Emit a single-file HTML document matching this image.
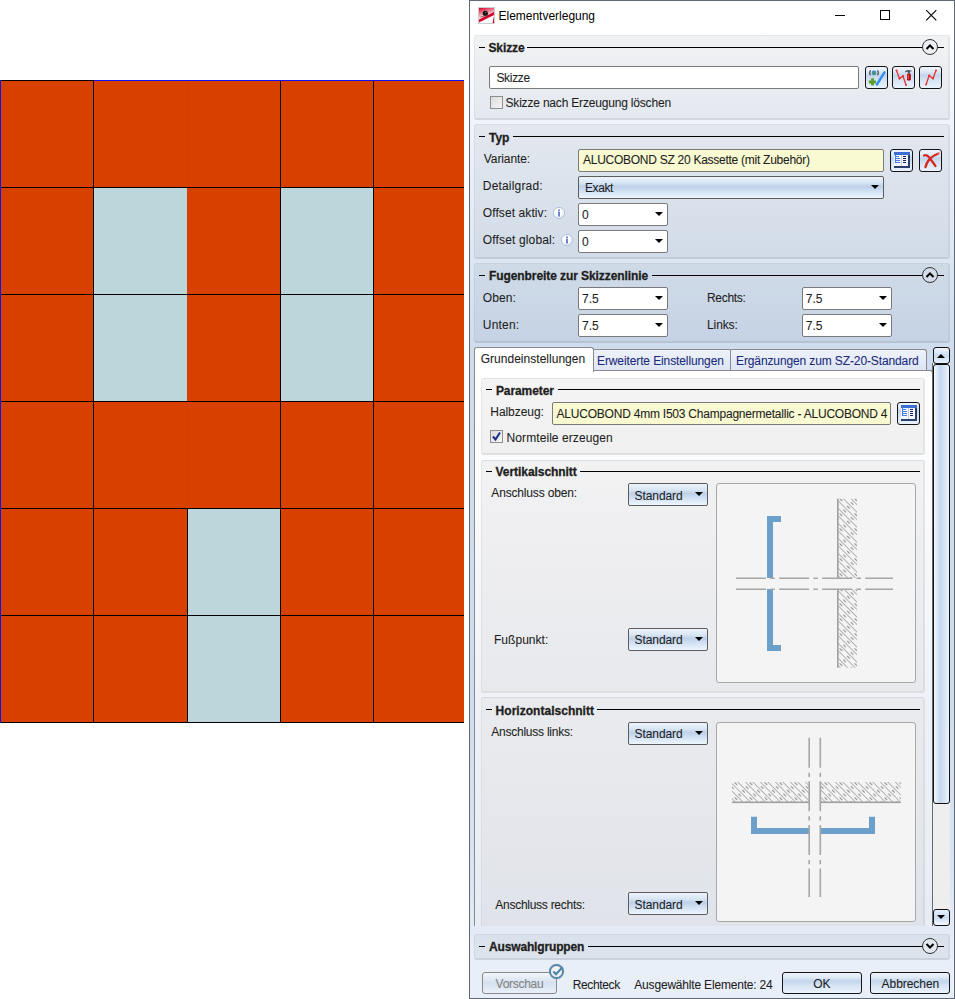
<!DOCTYPE html>
<html><head><meta charset="utf-8">
<style>
*{margin:0;padding:0;box-sizing:border-box}
html,body{width:955px;height:999px;overflow:hidden;background:#fff}
body{position:relative;font-family:"Liberation Sans",sans-serif;font-size:12px;color:#1e1e1e}
.a{position:absolute}
.t{position:absolute;white-space:nowrap;line-height:12px;font-size:12px;letter-spacing:-0.2px;-webkit-text-stroke:0.08px currentColor}
.b{font-weight:bold;letter-spacing:-0.15px;-webkit-text-stroke:0.3px currentColor}
#dlg{position:absolute;left:469px;top:0;width:486px;height:999px;border:1px solid #5f6873;
 background:linear-gradient(to bottom,#fff 0px,#fff 30px,#f2f5fb 110px,#dde7f3 250px,#cfdcee 345px,#cddcef 700px,#dbe5f3 880px,#e9eff8 960px,#e9eff8 999px)}
.grp{position:absolute;border-radius:3px;background:rgba(70,80,95,0.07);border:1px solid rgba(120,130,140,0.10);border-bottom:2px solid rgba(90,100,110,0.14);border-right:2px solid rgba(90,100,110,0.08)}
.hl{position:absolute;height:1px;background:#000}
.dash{position:absolute;height:1px;width:6px;background:#000}
.cb{position:absolute;background:#fff;border:1px solid #7a7a7a;border-radius:2px}
.cbg{position:absolute;border:1px solid #5c5c5c;border-radius:2px;background:linear-gradient(to bottom,#eef4fb 0%,#d8e5f4 28%,#bed1e9 45%,#d2e1f3 68%,#eef6fe 100%)}
.arr{position:absolute;width:0;height:0;border-left:4px solid transparent;border-right:4px solid transparent;border-top:4px solid #000}
.btn{position:absolute;border:1px solid #151515;border-radius:3px;background:linear-gradient(to bottom,#f0f5fb 0%,#dfe9f6 22%,#c3d5eb 40%,#d5e3f4 62%,#eaf3fd 100%)}
.circ{position:absolute;width:16px;height:16px;border:1px solid #333;border-radius:50%;background:transparent}
</style></head><body>

<!-- left grid -->
<svg class="a" style="left:0;top:0" width="465" height="725" viewBox="0 0 465 725" shape-rendering="crispEdges">
<rect x="0" y="80" width="464" height="643" fill="#d84000"/>
<rect x="93" y="187" width="94" height="107" fill="#bdd6dc"/>
<rect x="280" y="187" width="93" height="107" fill="#bdd6dc"/>
<rect x="93" y="294" width="94" height="107" fill="#bdd6dc"/>
<rect x="280" y="294" width="93" height="107" fill="#bdd6dc"/>
<rect x="187" y="508" width="93" height="107" fill="#bdd6dc"/>
<rect x="187" y="615" width="93" height="107" fill="#bdd6dc"/>
<rect x="187" y="80" width="1" height="428" fill="#cf3e02"/>
<rect x="93" y="80" width="1" height="643" fill="#000"/>
<rect x="280" y="80" width="1" height="643" fill="#000"/>
<rect x="373" y="80" width="1" height="643" fill="#000"/>
<rect x="187" y="508" width="1" height="215" fill="#000"/>
<rect x="0" y="187" width="464" height="1" fill="#000"/>
<rect x="0" y="294" width="464" height="1" fill="#000"/>
<rect x="0" y="401" width="464" height="1" fill="#000"/>
<rect x="0" y="508" width="464" height="1" fill="#000"/>
<rect x="0" y="615" width="464" height="1" fill="#000"/>
<rect x="0" y="722" width="464" height="1" fill="#000"/>
<rect x="0" y="80" width="94" height="1" fill="#000"/>
<rect x="94" y="80" width="370" height="1" fill="#1010f0"/>
<rect x="0" y="80" width="1" height="643" fill="#1010f0"/>
</svg>

<div id="dlg"></div>

<!-- title bar -->
<svg class="a" style="left:478px;top:7px" width="17" height="17" viewBox="0 0 17 17">
<defs><linearGradient id="ig" x1="0" y1="0" x2="0.3" y2="1"><stop offset="0" stop-color="#dc0028"/><stop offset="0.45" stop-color="#f0a0b0"/><stop offset="0.75" stop-color="#fff"/></linearGradient></defs>
<rect x="0.5" y="0.5" width="16" height="16" fill="#fff" stroke="#c8cdd2" stroke-width="1"/>
<rect x="1" y="1" width="15" height="15" fill="url(#ig)"/>
<path d="M1 12.5 L16 5 L16 8 L1 15.5 Z" fill="#dc0028"/>
<path d="M16 9 L16 16 L14.5 16 Z" fill="#dc0028"/>
<circle cx="7.3" cy="6.3" r="2.6" fill="#151515"/>
<circle cx="7.8" cy="5.6" r="0.7" fill="#888"/>
<path d="M2.5 10.2 L6 9 L10.5 8.4" stroke="#444" stroke-width="0.7" fill="none"/>
</svg>
<div class="t" style="left:498.5px;top:10px;letter-spacing:-0.013px;color:#000;-webkit-text-stroke:0">Elementverlegung</div>
<div class="a" style="left:835px;top:15px;width:10px;height:1px;background:#000"></div>
<div class="a" style="left:880px;top:10px;width:10px;height:10px;border:1px solid #000"></div>
<svg class="a" style="left:925px;top:9px" width="13" height="13" viewBox="0 0 13 13"><path d="M1.2 1.2 L11.3 11.3 M11.3 1.2 L1.2 11.3" stroke="#000" stroke-width="1.1"/></svg>

<!-- Skizze group -->
<div class="grp" style="left:474px;top:35px;width:476px;height:85px"></div>
<div class="dash" style="left:479px;top:47px"></div>
<div class="t b" style="left:488.4px;top:42px;letter-spacing:-0.08px">Skizze</div>
<div class="hl" style="left:527px;top:47px;width:417px"></div>
<div class="circ" style="left:922px;top:39px;background:#eceff4"></div>
<svg class="a" style="left:925px;top:43px" width="10" height="8" viewBox="0 0 10 8"><path d="M1.5 6 L5 2.5 L8.5 6" stroke="#000" stroke-width="2" fill="none"/></svg>
<div class="cb" style="left:489px;top:66px;width:370px;height:23px"></div>
<div class="t" style="left:496.4px;top:72px;letter-spacing:-0.3px">Skizze</div>
<div class="btn" style="left:865px;top:66px;width:23px;height:23px"></div>
<div class="btn" style="left:892px;top:66px;width:23px;height:23px"></div>
<div class="btn" style="left:919px;top:66px;width:23px;height:23px"></div>
<svg class="a" style="left:865px;top:66px" width="23" height="23" viewBox="0 0 23 23">
<path d="M5.6 4.4 Q3.6 6.8 5.6 9.2" stroke="#5a5a5a" stroke-width="1.3" fill="none"/><path d="M12.4 4.4 Q14.4 6.8 12.4 9.2" stroke="#5a5a5a" stroke-width="1.3" fill="none"/>
<circle cx="9" cy="6.9" r="2.4" fill="#3b8fd4"/><path d="M7.6 6.2 L9 8.2 L10.6 6.6" stroke="#4aa040" stroke-width="1.2" fill="none"/>
<path d="M6.1 12.2 h2.8 v2.4 h2.2 v2.8 h-2.2 v2.2 h-2.8 v-2.2 h-2.2 v-2.8 h2.2 Z" fill="#5c9e2c"/>
<path d="M19.5 6.3 L11.9 18.5" stroke="#2f90f2" stroke-width="2.4" stroke-linecap="round"/>
</svg>
<svg class="a" style="left:892px;top:66px" width="23" height="23" viewBox="0 0 23 23">
<path d="M4.5 4.4 L7.5 12.6 L11 10 L14 19" stroke="#e8302a" stroke-width="1.3" fill="none"/>
<circle cx="4.5" cy="4.4" r="1" fill="#e8302a"/><circle cx="7.5" cy="12.6" r="1" fill="#e8302a"/><circle cx="11" cy="10" r="1" fill="#e8302a"/><circle cx="14" cy="19" r="1" fill="#e8302a"/>
<rect x="15" y="7.5" width="3.8" height="7" rx="1" fill="#b00000"/><rect x="15.7" y="8.5" width="1.2" height="4.5" fill="#ff6060"/>
<path d="M13 5.2 Q16 3.2 19.5 4.6 L19.5 5.6 L18 5.6 L18 7.5 L15.8 7.5 L15.8 5.8 Q14.5 5.6 13 6.4 Z" fill="#505a66"/>
</svg>
<svg class="a" style="left:919px;top:66px" width="23" height="23" viewBox="0 0 23 23">
<path d="M7.1 18.6 L10.1 9.6 L14 12.6 L17 4.4" stroke="#e8302a" stroke-width="1.3" fill="none"/>
<circle cx="7.1" cy="18.6" r="1" fill="#e8302a"/><circle cx="10.1" cy="9.6" r="1" fill="#e8302a"/><circle cx="14" cy="12.6" r="1" fill="#e8302a"/><circle cx="17" cy="4.4" r="1" fill="#e8302a"/>
</svg>
<div class="a" style="left:490px;top:96px;width:13px;height:13px;border:1px solid #8e8f8f;background:linear-gradient(135deg,#dcdcdc,#f6f6f6)"></div>
<div class="t" style="left:505.5px;top:97px;letter-spacing:-0.186px">Skizze nach Erzeugung löschen</div>

<!-- Typ group -->
<div class="grp" style="left:474px;top:124px;width:476px;height:135px"></div>
<div class="dash" style="left:479px;top:136px"></div>
<div class="t b" style="left:489px;top:132px;letter-spacing:-0.05px">Typ</div>
<div class="hl" style="left:513px;top:136px;width:431px"></div>
<div class="t" style="left:483.8px;top:153px;letter-spacing:-0.1px">Variante:</div>
<div class="cb" style="left:578px;top:149px;width:306px;height:23px;background:#fafad2"></div>
<div class="t" style="left:583px;top:154px;letter-spacing:-0.265px">ALUCOBOND SZ 20 Kassette (mit Zubehör)</div>
<div class="btn" style="left:890px;top:149px;width:23px;height:23px"></div>
<div class="btn" style="left:919px;top:149px;width:23px;height:23px"></div>
<svg class="a" style="left:890px;top:149px" width="23" height="23" viewBox="0 0 23 23" shape-rendering="crispEdges">
<rect x="4" y="3" width="16" height="16" fill="#f4f7fc"/>
<rect x="4" y="3" width="16" height="3" fill="#3d6ed6"/>
<rect x="18" y="6" width="2" height="13" fill="#2a3f6c"/><rect x="4" y="17" width="16" height="2" fill="#2a3f6c"/>
<rect x="11" y="6" width="1" height="11" fill="#c4ccd8"/>
<rect x="5" y="6" width="1" height="8" fill="#4a7ae6"/>
<rect x="5" y="7" width="4" height="1" fill="#4a7ae6"/><rect x="6" y="9" width="4" height="1" fill="#4a7ae6"/><rect x="6" y="11" width="4" height="1" fill="#4a7ae6"/><rect x="6" y="13" width="4" height="1" fill="#4a7ae6"/>
<rect x="13" y="7" width="3" height="1" fill="#121d5e"/><rect x="13" y="9" width="3" height="1" fill="#121d5e"/><rect x="13" y="11" width="3" height="1" fill="#121d5e"/><rect x="13" y="13" width="3" height="1" fill="#121d5e"/>
</svg>
<svg class="a" style="left:919px;top:149px" width="23" height="23" viewBox="0 0 23 23">
<path d="M5 6.5 Q8 5 11 9.5 Q14 13.5 16.5 17" stroke="#d8281e" stroke-width="2.2" fill="none" stroke-linecap="round"/>
<path d="M19.5 4.5 Q13 7 9.5 11.5 Q7 15 6.5 18" stroke="#d8281e" stroke-width="2.4" fill="none" stroke-linecap="round"/>
<circle cx="19.5" cy="4.6" r="0.8" fill="#f08080"/>
</svg>
<div class="t" style="left:482.8px;top:180px;letter-spacing:0.18px">Detailgrad:</div>
<div class="cbg" style="left:578px;top:176px;width:306px;height:23px"></div>
<div class="t" style="left:585px;top:182px;letter-spacing:-0.4px">Exakt</div>
<div class="arr" style="left:871px;top:185px"></div>
<div class="t" style="left:482.8px;top:207px;letter-spacing:0.092px">Offset aktiv:</div>
<svg class="a" style="left:552px;top:206px" width="14" height="14" viewBox="0 0 14 14">
<defs><radialGradient id="ri559" cx="0.45" cy="0.4" r="0.6"><stop offset="0.5" stop-color="#fff"/><stop offset="1" stop-color="#dfe6f2"/></radialGradient></defs>
<circle cx="7" cy="7" r="5.6" fill="url(#ri559)" stroke="#a8bcd8" stroke-width="0.9"/>
<rect x="6.2" y="3.4" width="1.6" height="1.5" fill="#4a66c8"/><rect x="6.2" y="5.6" width="1.6" height="5" fill="#4a66c8"/>
</svg>
<div class="cb" style="left:578px;top:203px;width:90px;height:23px"></div>
<div class="t" style="left:582px;top:209px;letter-spacing:0px">0</div>
<div class="arr" style="left:655px;top:212px"></div>
<div class="t" style="left:482.8px;top:234px;letter-spacing:0.146px">Offset global:</div>
<svg class="a" style="left:560px;top:233px" width="14" height="14" viewBox="0 0 14 14">
<defs><radialGradient id="ri567" cx="0.45" cy="0.4" r="0.6"><stop offset="0.5" stop-color="#fff"/><stop offset="1" stop-color="#dfe6f2"/></radialGradient></defs>
<circle cx="7" cy="7" r="5.6" fill="url(#ri567)" stroke="#a8bcd8" stroke-width="0.9"/>
<rect x="6.2" y="3.4" width="1.6" height="1.5" fill="#4a66c8"/><rect x="6.2" y="5.6" width="1.6" height="5" fill="#4a66c8"/>
</svg>
<div class="cb" style="left:578px;top:230px;width:90px;height:23px"></div>
<div class="t" style="left:582px;top:236px;letter-spacing:0px">0</div>
<div class="arr" style="left:655px;top:239px"></div>

<!-- Fugenbreite group -->
<div class="grp" style="left:474px;top:263px;width:476px;height:80px"></div>
<div class="dash" style="left:479px;top:275px"></div>
<div class="t b" style="left:489px;top:270px;letter-spacing:-0.081px">Fugenbreite zur Skizzenlinie</div>
<div class="hl" style="left:652px;top:275px;width:292px"></div>
<div class="circ" style="left:922px;top:267px;background:#d3dce8"></div>
<svg class="a" style="left:925px;top:271px" width="10" height="8" viewBox="0 0 10 8"><path d="M1.5 6 L5 2.5 L8.5 6" stroke="#000" stroke-width="2" fill="none"/></svg>
<div class="t" style="left:482.8px;top:292px;letter-spacing:0.1px">Oben:</div>
<div class="cb" style="left:578px;top:287px;width:90px;height:23px"></div>
<div class="t" style="left:582px;top:293px;letter-spacing:0px">7.5</div>
<div class="arr" style="left:655px;top:296px"></div>
<div class="t" style="left:482.8px;top:319px;letter-spacing:0.2px">Unten:</div>
<div class="cb" style="left:578px;top:314px;width:90px;height:23px"></div>
<div class="t" style="left:582px;top:320px;letter-spacing:0px">7.5</div>
<div class="arr" style="left:655px;top:323px"></div>
<div class="t" style="left:707px;top:292px;letter-spacing:-0.3px">Rechts:</div>
<div class="cb" style="left:802px;top:287px;width:90px;height:23px"></div>
<div class="t" style="left:805.8px;top:293px;letter-spacing:0px">7.5</div>
<div class="arr" style="left:879px;top:296px"></div>
<div class="t" style="left:707px;top:319px;letter-spacing:-0.1px">Links:</div>
<div class="cb" style="left:802px;top:314px;width:90px;height:23px"></div>
<div class="t" style="left:805.8px;top:320px;letter-spacing:0px">7.5</div>
<div class="arr" style="left:879px;top:323px"></div>

<!-- tabs -->
<div class="a" style="left:474px;top:370px;width:459px;height:556px;border:1px solid #8a8a8a;border-bottom:none;border-radius:0 3px 0 0;background:linear-gradient(to bottom,#fff 0px,#fbfcfd 80px,#f3f6fa 250px,#edf1f7 350px,#e8edf5 555px)"></div>
<div class="a" style="left:593px;top:349px;width:138px;height:21px;border:1px solid #8a8a8a;border-bottom:none;border-radius:2px 2px 0 0;background:linear-gradient(to bottom,#eef2f9,#dde5f7)"></div>
<div class="a" style="left:730px;top:349px;width:197px;height:21px;border:1px solid #8a8a8a;border-bottom:none;border-radius:2px 3px 0 0;background:linear-gradient(to bottom,#eef2f9,#dde5f7)"></div>
<div class="a" style="left:474px;top:347px;width:120px;height:25px;border:1px solid #8a8a8a;border-bottom:none;border-radius:3px 3px 0 0;background:#fff"></div>
<div class="t" style="left:480.7px;top:353px;letter-spacing:0.024px">Grundeinstellungen</div>
<div class="t" style="left:597px;top:355px;letter-spacing:-0.109px;color:#1c2a78">Erweiterte Einstellungen</div>
<div class="t" style="left:736px;top:355px;letter-spacing:-0.117px;color:#1c2a78">Ergänzungen zum SZ-20-Standard</div>

<!-- scrollbar -->
<div class="a" style="left:932px;top:363px;width:1px;height:563px;background:#6a6a6a"></div>
<div class="a" style="left:933px;top:363px;width:17px;height:547px;background:#eeeeee"></div>
<div class="a" style="left:933px;top:347px;width:17px;height:17px;border:1px solid #111;border-radius:3px;background:linear-gradient(to bottom,#f3f8fe,#c9daf0 50%,#e6f0fb)"></div>
<div class="arr" style="left:937px;top:354px;border-top:none;border-bottom:4px solid #000"></div>
<div class="a" style="left:933px;top:364px;width:17px;height:440px;border:1px solid #111;border-radius:3px;background:linear-gradient(to right,#f4f9ff,#c5d7ee 40%,#d5e3f4 70%,#eef5fd)"></div>
<div class="a" style="left:933px;top:909px;width:17px;height:17px;border:1px solid #111;border-radius:3px;background:linear-gradient(to bottom,#e6f0fb,#c9daf0 50%,#f3f8fe)"></div>
<div class="arr" style="left:937px;top:915px"></div>

<!-- Parameter group -->
<div class="grp" style="left:481px;top:378px;width:444px;height:77px;background:linear-gradient(#f4f4f4,#f0f0f1)"></div>
<div class="dash" style="left:486px;top:389px"></div>
<div class="t b" style="left:495.9px;top:385px;letter-spacing:-0.088px">Parameter</div>
<div class="hl" style="left:558px;top:389px;width:362px"></div>
<div class="t" style="left:490.3px;top:406px;letter-spacing:-0.062px">Halbzeug:</div>
<div class="cb" style="left:552px;top:402px;width:339px;height:23px;background:#fafad2;overflow:hidden"><div class="t" style="left:3.6px;top:5px;letter-spacing:-0.224px">ALUCOBOND 4mm I503 Champagnermetallic - ALUCOBOND 4</div></div>
<div class="btn" style="left:897px;top:402px;width:23px;height:23px"></div>
<svg class="a" style="left:897px;top:402px" width="23" height="23" viewBox="0 0 23 23" shape-rendering="crispEdges">
<rect x="4" y="3" width="16" height="16" fill="#f4f7fc"/>
<rect x="4" y="3" width="16" height="3" fill="#3d6ed6"/>
<rect x="18" y="6" width="2" height="13" fill="#2a3f6c"/><rect x="4" y="17" width="16" height="2" fill="#2a3f6c"/>
<rect x="11" y="6" width="1" height="11" fill="#c4ccd8"/>
<rect x="5" y="6" width="1" height="8" fill="#4a7ae6"/>
<rect x="5" y="7" width="4" height="1" fill="#4a7ae6"/><rect x="6" y="9" width="4" height="1" fill="#4a7ae6"/><rect x="6" y="11" width="4" height="1" fill="#4a7ae6"/><rect x="6" y="13" width="4" height="1" fill="#4a7ae6"/>
<rect x="13" y="7" width="3" height="1" fill="#121d5e"/><rect x="13" y="9" width="3" height="1" fill="#121d5e"/><rect x="13" y="11" width="3" height="1" fill="#121d5e"/><rect x="13" y="13" width="3" height="1" fill="#121d5e"/>
</svg>
<div class="a" style="left:490px;top:430px;width:13px;height:13px;border:1px solid #8e8f8f;background:linear-gradient(135deg,#dcdcdc,#f6f6f6)"></div>
<svg class="a" style="left:491px;top:431px" width="11" height="11" viewBox="0 0 11 11"><path d="M2 5.5 L4.5 8.5 L9 1.5" stroke="#1a2d8a" stroke-width="2" fill="none"/></svg>
<div class="t" style="left:506.6px;top:432px;letter-spacing:0.076px">Normteile erzeugen</div>

<!-- Vertikalschnitt -->
<div class="grp" style="left:481px;top:460px;width:444px;height:233px;background:linear-gradient(#f2f2f3,#e8e9ed)"></div>
<div class="dash" style="left:486px;top:471px"></div>
<div class="t b" style="left:495.6px;top:466px;letter-spacing:-0.064px">Vertikalschnitt</div>
<div class="hl" style="left:580px;top:471px;width:340px"></div>
<div class="t" style="left:491.3px;top:487px;letter-spacing:-0.164px">Anschluss oben:</div>
<div class="cbg" style="left:628px;top:483px;width:80px;height:23px"></div>
<div class="t" style="left:634.5px;top:490px;letter-spacing:-0.071px">Standard</div>
<div class="arr" style="left:695px;top:492px"></div>
<div class="t" style="left:494px;top:634px;letter-spacing:0.038px">Fußpunkt:</div>
<div class="cbg" style="left:628px;top:628px;width:80px;height:23px"></div>
<div class="t" style="left:634.5px;top:634px;letter-spacing:-0.071px">Standard</div>
<div class="arr" style="left:695px;top:637px"></div>
<div class="a" style="left:716px;top:483px;width:200px;height:200px;border:1px solid #a8a8a8;border-radius:3px;background:#f4f4f4"></div>
<svg class="a" style="left:716px;top:483px" width="200" height="200" viewBox="0 0 200 200">
<defs>
<pattern id="hat" patternUnits="userSpaceOnUse" width="10.6" height="5.3" patternTransform="rotate(45)">
<rect x="0" y="0" width="10.6" height="0.9" fill="#acacac"/>
<rect x="3" y="2.5" width="3.6" height="1.1" fill="#8e8e8e"/>
</pattern>
</defs>
<rect x="121" y="15.7" width="20" height="79.3" fill="url(#hat)"/>
<rect x="121" y="106.5" width="20" height="78.2" fill="url(#hat)"/>
<rect x="121" y="15.7" width="1.6" height="79.3" fill="#a0a0a0"/>
<rect x="121" y="106.5" width="1.6" height="78.2" fill="#a0a0a0"/>
<path d="M51 33 H65 V39 H57 V95 H51 Z" fill="#6d9fcb"/>
<path d="M51 106 H57 V162 H65 V168 H51 Z" fill="#6d9fcb"/>
<line x1="20" y1="95.2" x2="177" y2="95.2" stroke="#a6a6a6" stroke-width="1.6" stroke-dasharray="30 4.3 4.5 4.3"/>
<line x1="20" y1="106.2" x2="177" y2="106.2" stroke="#a6a6a6" stroke-width="1.6" stroke-dasharray="30 4.3 4.5 4.3"/>
</svg>

<!-- Horizontalschnitt -->
<div class="a" style="left:481px;top:697px;width:444px;height:229px;border-radius:3px 3px 0 0;background:linear-gradient(#eaebee,#e0e3ea);border:1px solid rgba(120,130,140,0.10);border-bottom:none;border-right:2px solid rgba(90,100,110,0.08)"></div>
<div class="dash" style="left:486px;top:709px"></div>
<div class="t b" style="left:495.6px;top:705px;letter-spacing:0.025px">Horizontalschnitt</div>
<div class="hl" style="left:597px;top:709px;width:323px"></div>
<div class="t" style="left:491.3px;top:726px;letter-spacing:-0.24px">Anschluss links:</div>
<div class="cbg" style="left:628px;top:722px;width:80px;height:23px"></div>
<div class="t" style="left:634.5px;top:728px;letter-spacing:-0.071px">Standard</div>
<div class="arr" style="left:695px;top:731px"></div>
<div class="t" style="left:495.3px;top:899px;letter-spacing:-0.269px">Anschluss rechts:</div>
<div class="cbg" style="left:628px;top:892px;width:80px;height:23px"></div>
<div class="t" style="left:634.5px;top:899px;letter-spacing:-0.071px">Standard</div>
<div class="arr" style="left:695px;top:901px"></div>
<div class="a" style="left:716px;top:722px;width:200px;height:200px;border:1px solid #a8a8a8;border-radius:3px;background:#f4f4f4"></div>
<svg class="a" style="left:716px;top:722px" width="200" height="200" viewBox="0 0 200 200">
<rect x="16" y="60" width="77" height="20.5" fill="url(#hat)"/>
<rect x="104.7" y="60" width="80" height="20.5" fill="url(#hat)"/>
<rect x="16" y="79.5" width="77" height="1.6" fill="#a0a0a0"/>
<rect x="104.7" y="79.5" width="80" height="1.6" fill="#a0a0a0"/>
<path d="M35 94.7 H41 V106 H93 V112 H35 Z" fill="#6d9fcb"/>
<path d="M104.7 106 H153 V94.7 H159 V112 H104.7 Z" fill="#6d9fcb"/>
<line x1="93.2" y1="15.7" x2="93.2" y2="175" stroke="#a6a6a6" stroke-width="1.6" stroke-dasharray="30 5 4.3 4.3"/>
<line x1="104.3" y1="15.7" x2="104.3" y2="175" stroke="#a6a6a6" stroke-width="1.6" stroke-dasharray="30 5 4.3 4.3"/>
</svg>

<!-- Auswahlgruppen -->
<div class="grp" style="left:474px;top:934px;width:476px;height:26px"></div>
<div class="dash" style="left:479px;top:946px"></div>
<div class="t b" style="left:489px;top:941px;letter-spacing:-0.154px">Auswahlgruppen</div>
<div class="hl" style="left:588px;top:946px;width:356px"></div>
<div class="circ" style="left:922px;top:938px;background:#e3e8ef"></div>
<svg class="a" style="left:925px;top:942px" width="10" height="8" viewBox="0 0 10 8"><path d="M1.5 2 L5 5.5 L8.5 2" stroke="#000" stroke-width="2" fill="none"/></svg>

<!-- footer -->
<div class="a" style="left:482px;top:972px;width:75px;height:22px;border:1px solid #8a8a8a;border-radius:3px;background:linear-gradient(to bottom,#f2f6fb,#d5e1ef 50%,#e9f0f9)"></div>
<div class="t" style="left:495.6px;top:978px;letter-spacing:-0.286px;color:#838383">Vorschau</div>
<div class="a" style="left:549px;top:964px;width:15px;height:15px;border-radius:50%;border:2px solid #5a89ab;background:#f2f2f2;box-shadow:0 0 1px rgba(0,0,0,0.25)"></div>
<svg class="a" style="left:551px;top:966px" width="13" height="11" viewBox="0 0 13 11"><path d="M2.3 5.5 L5 8.2 L11.5 1.2" stroke="#4d86aa" stroke-width="2.2" fill="none"/></svg>
<div class="t" style="left:572.7px;top:979px;letter-spacing:-0.357px">Rechteck</div>
<div class="t" style="left:634.3px;top:979px;letter-spacing:-0.187px">Ausgewählte Elemente: 24</div>
<div class="btn" style="left:782px;top:972px;width:80px;height:22px"></div>
<div class="t" style="left:813.2px;top:978px;letter-spacing:-0.1px">OK</div>
<div class="btn" style="left:870px;top:972px;width:80px;height:22px"></div>
<div class="t" style="left:881.6px;top:978px;letter-spacing:-0.05px">Abbrechen</div>

</body></html>
